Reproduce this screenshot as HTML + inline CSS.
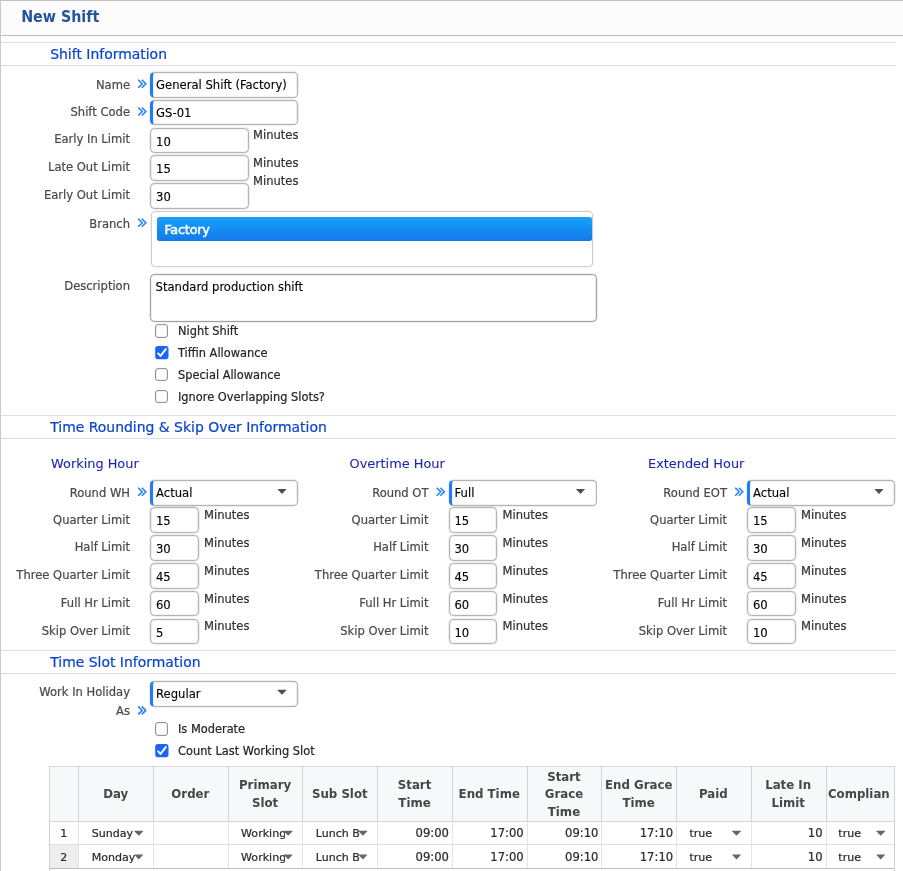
<!DOCTYPE html>
<html><head><meta charset="utf-8"><title>New Shift</title>
<style>
html,body{margin:0;padding:0;background:#fff;}
body{width:903px;height:871px;overflow:hidden;position:relative;font-family:"DejaVu Sans","Liberation Sans",sans-serif;font-size:11.55px;color:#4a4a4a;}
#w{position:absolute;left:0;top:0;width:903px;height:871px;overflow:hidden;will-change:transform;}
.a{position:absolute;white-space:nowrap;-webkit-text-stroke:0.22px currentColor;}
.hdr{left:0;top:0;width:903px;height:34px;background:#fcfcfc;border-top:1px solid #c4c4c4;border-bottom:1px solid #bdbdbd;box-sizing:content-box;}
.vl{left:0;top:0;width:1px;height:871px;background:#c9c9c9;}
.title{left:21.2px;top:8px;-webkit-text-stroke:0;font-family:"DejaVu Sans Condensed","DejaVu Sans",sans-serif;font-weight:bold;font-size:15.85px;color:#22559a;line-height:18px;}
.ln{left:1px;width:895px;height:1px;background:#dcdcf2;}
.sec{left:50.2px;font-size:13.95px;color:#0b45cf;line-height:18px;}
.sub{font-size:12.9px;-webkit-text-stroke:0.1px currentColor;color:#1d27ad;line-height:16px;}
.lb{text-align:right;width:130px;left:0;line-height:14px;color:#4a4a4a;}
.mn{color:#333;line-height:14px;}
.in{box-sizing:border-box;height:25.6px;border:1px solid #b4b4b4;border-radius:4.5px;background:#fff;font-family:"DejaVu Sans Condensed","Liberation Sans",sans-serif;font-size:12.9px;color:#000;line-height:24.6px;padding-left:5.5px;box-shadow:0 0 0 0.5px rgba(0,0,0,.13),inset 0 0 0 0.5px rgba(0,0,0,.10);-webkit-text-stroke:0.12px currentColor;}
.rq{border-left:3px solid #1f7bfb;padding-left:3.1px;}
.ch{width:10px;height:10px;}
.cb{box-sizing:border-box;width:13.3px;height:13.3px;border:1px solid #949494;border-radius:3px;background:#fff;left:155.2px;box-shadow:inset 0 0 0 0.5px rgba(0,0,0,.12);}
.cl{left:178px;color:#262626;line-height:14px;font-size:11.4px;}
.tb{overflow:hidden;}
.th{display:flex;align-items:center;justify-content:center;text-align:center;font-family:"DejaVu Sans Condensed","DejaVu Sans",sans-serif;font-weight:bold;font-size:13.1px;line-height:17.8px;color:#464646;white-space:nowrap;overflow:hidden;-webkit-text-stroke:0;padding-top:1px;box-sizing:border-box;}
.td{font-size:11.05px;line-height:23.5px;height:23.5px;color:#2a2a2a;}
</style></head><body><div id="w">
<div class="a hdr"></div><div class="a vl"></div><div class="a title">New Shift</div>
<div class="a ln" style="top:42px"></div><div class="a sec" style="top:45px">Shift Information</div><div class="a ln" style="top:65px"></div>
<div class="a lb" style="top:77.5px">Name</div>
<svg class="a" style="left:137px;top:78px;width:11px;height:11px" viewBox="0 0 11 11"><g transform="translate(0.20 0.80)"><path d="M1 0.9 L5.0 4.9 L1 8.9 M4.6 0.9 L8.6 4.9 L4.6 8.9" fill="none" stroke="#267ffb" stroke-width="1.55"/></g></svg>
<div class="a in rq" style="left:150px;top:72px;width:148px">General Shift (Factory)</div>
<div class="a lb" style="top:105.3px">Shift Code</div>
<svg class="a" style="left:137px;top:106px;width:11px;height:11px" viewBox="0 0 11 11"><g transform="translate(0.20 0.60)"><path d="M1 0.9 L5.0 4.9 L1 8.9 M4.6 0.9 L8.6 4.9 L4.6 8.9" fill="none" stroke="#267ffb" stroke-width="1.55"/></g></svg>
<div class="a in rq" style="left:150px;top:99.8px;width:148px">GS-01</div>
<div class="a lb" style="top:132.1px">Early In Limit</div>
<div class="a in" style="left:150px;top:127.6px;width:98.5px;line-height:26px;padding-left:5px">10</div>
<div class="a mn" style="left:253px;top:128.1px">Minutes</div>
<div class="a lb" style="top:159.9px">Late Out Limit</div>
<div class="a in" style="left:150px;top:155.4px;width:98.5px;line-height:26px;padding-left:5px">15</div>
<div class="a mn" style="left:253px;top:155.9px">Minutes</div>
<div class="a lb" style="top:187.7px">Early Out Limit</div>
<div class="a in" style="left:150px;top:183.2px;width:98.5px;line-height:26px;padding-left:5px">30</div>
<div class="a mn" style="left:253px;top:173.7px">Minutes</div>
<div class="a lb" style="top:216.5px">Branch</div>
<svg class="a" style="left:137px;top:217px;width:11px;height:11px" viewBox="0 0 11 11"><g transform="translate(0.20 0.80)"><path d="M1 0.9 L5.0 4.9 L1 8.9 M4.6 0.9 L8.6 4.9 L4.6 8.9" fill="none" stroke="#267ffb" stroke-width="1.55"/></g></svg>
<div class="a" style="left:151px;top:211px;width:442px;height:55.7px;box-sizing:border-box;border:1px solid #cdcdcd;border-radius:4px;background:#fff;box-shadow:0 0 0 0.5px rgba(0,0,0,.06)"></div>
<div class="a" style="left:157.2px;top:216.7px;width:434.6px;height:24.3px;background:linear-gradient(#17a1f9,#1479ea);color:#fff;font-size:12.8px;letter-spacing:-0.2px;-webkit-text-stroke:0.5px #fff;line-height:25.8px;padding-left:7.2px;box-sizing:border-box;border-radius:2.5px">Factory</div>
<div class="a lb" style="top:278.5px">Description</div>
<div class="a in" style="left:150px;top:274px;width:447px;height:47.5px;line-height:16px;padding-top:4px;padding-left:4.6px;border-color:#a2a2a2">Standard production shift</div>
<div class="a cb" style="top:324.25px"></div><div class="a cl" style="top:324.1px">Night Shift</div>
<svg class="a" style="left:155px;top:346px;width:15px;height:15px" viewBox="0 0 15 15"><g transform="translate(0.20 0.05)"><rect x="0" y="0" width="13.3" height="13.3" rx="2.8" fill="#1c63fb"/><path d="M2.9 7.3 L5.3 9.9 L10.6 3.0" fill="none" stroke="#fff" stroke-width="1.9" stroke-linecap="round" stroke-linejoin="round"/></g></svg><div class="a cl" style="top:345.9px">Tiffin Allowance</div>
<div class="a cb" style="top:367.85px"></div><div class="a cl" style="top:367.7px">Special Allowance</div>
<div class="a cb" style="top:389.65px"></div><div class="a cl" style="top:389.5px">Ignore Overlapping Slots?</div>
<div class="a ln" style="top:415px"></div><div class="a sec" style="top:418px">Time Rounding &amp; Skip Over Information</div><div class="a ln" style="top:438px"></div>
<div class="a sub" style="left:51px;top:456px">Working Hour</div>
<div class="a lb" style="left:0px;top:485.6px">Round WH</div>
<svg class="a" style="left:137px;top:486px;width:11px;height:11px" viewBox="0 0 11 11"><g transform="translate(0.20 0.80)"><path d="M1 0.9 L5.0 4.9 L1 8.9 M4.6 0.9 L8.6 4.9 L4.6 8.9" fill="none" stroke="#267ffb" stroke-width="1.55"/></g></svg>
<div class="a in rq" style="left:150px;top:480px;width:148px">Actual</div>
<svg class="a" style="left:277px;top:488px;width:11px;height:7px" viewBox="0 0 11 7"><g transform="translate(0.00 0.50)"><path d="M0.9 0.4 H9.1 Q9.7 0.5 9.2 1.1 L5.5 5.0 Q5 5.5 4.5 5.0 L0.8 1.1 Q0.3 0.5 0.9 0.4Z" fill="#4f4f4f"/></g></svg>
<div class="a lb" style="left:0px;top:512.5px">Quarter Limit</div>
<div class="a in" style="left:150.3px;top:507.4px;width:48.3px;padding-left:4.6px;line-height:26.4px">15</div>
<div class="a mn" style="left:204px;top:508.1px">Minutes</div>
<div class="a lb" style="left:0px;top:540.3px">Half Limit</div>
<div class="a in" style="left:150.3px;top:535.2px;width:48.3px;padding-left:4.6px;line-height:26.4px">30</div>
<div class="a mn" style="left:204px;top:535.9px">Minutes</div>
<div class="a lb" style="left:0px;top:568.1px">Three Quarter Limit</div>
<div class="a in" style="left:150.3px;top:563px;width:48.3px;padding-left:4.6px;line-height:26.4px">45</div>
<div class="a mn" style="left:204px;top:563.7px">Minutes</div>
<div class="a lb" style="left:0px;top:595.9px">Full Hr Limit</div>
<div class="a in" style="left:150.3px;top:590.8px;width:48.3px;padding-left:4.6px;line-height:26.4px">60</div>
<div class="a mn" style="left:204px;top:591.5px">Minutes</div>
<div class="a lb" style="left:0px;top:623.7px">Skip Over Limit</div>
<div class="a in" style="left:150.3px;top:618.6px;width:48.3px;padding-left:4.6px;line-height:26.4px">5</div>
<div class="a mn" style="left:204px;top:619.3px">Minutes</div>
<div class="a sub" style="left:349.5px;top:456px">Overtime Hour</div>
<div class="a lb" style="left:298.5px;top:485.6px">Round OT</div>
<svg class="a" style="left:435px;top:486px;width:11px;height:11px" viewBox="0 0 11 11"><g transform="translate(0.70 0.80)"><path d="M1 0.9 L5.0 4.9 L1 8.9 M4.6 0.9 L8.6 4.9 L4.6 8.9" fill="none" stroke="#267ffb" stroke-width="1.55"/></g></svg>
<div class="a in rq" style="left:448.5px;top:480px;width:148px">Full</div>
<svg class="a" style="left:575px;top:488px;width:11px;height:7px" viewBox="0 0 11 7"><g transform="translate(0.50 0.50)"><path d="M0.9 0.4 H9.1 Q9.7 0.5 9.2 1.1 L5.5 5.0 Q5 5.5 4.5 5.0 L0.8 1.1 Q0.3 0.5 0.9 0.4Z" fill="#4f4f4f"/></g></svg>
<div class="a lb" style="left:298.5px;top:512.5px">Quarter Limit</div>
<div class="a in" style="left:448.8px;top:507.4px;width:48.3px;padding-left:4.6px;line-height:26.4px">15</div>
<div class="a mn" style="left:502.5px;top:508.1px">Minutes</div>
<div class="a lb" style="left:298.5px;top:540.3px">Half Limit</div>
<div class="a in" style="left:448.8px;top:535.2px;width:48.3px;padding-left:4.6px;line-height:26.4px">30</div>
<div class="a mn" style="left:502.5px;top:535.9px">Minutes</div>
<div class="a lb" style="left:298.5px;top:568.1px">Three Quarter Limit</div>
<div class="a in" style="left:448.8px;top:563px;width:48.3px;padding-left:4.6px;line-height:26.4px">45</div>
<div class="a mn" style="left:502.5px;top:563.7px">Minutes</div>
<div class="a lb" style="left:298.5px;top:595.9px">Full Hr Limit</div>
<div class="a in" style="left:448.8px;top:590.8px;width:48.3px;padding-left:4.6px;line-height:26.4px">60</div>
<div class="a mn" style="left:502.5px;top:591.5px">Minutes</div>
<div class="a lb" style="left:298.5px;top:623.7px">Skip Over Limit</div>
<div class="a in" style="left:448.8px;top:618.6px;width:48.3px;padding-left:4.6px;line-height:26.4px">10</div>
<div class="a mn" style="left:502.5px;top:619.3px">Minutes</div>
<div class="a sub" style="left:648px;top:456px">Extended Hour</div>
<div class="a lb" style="left:597px;top:485.6px">Round EOT</div>
<svg class="a" style="left:734px;top:486px;width:11px;height:11px" viewBox="0 0 11 11"><g transform="translate(0.20 0.80)"><path d="M1 0.9 L5.0 4.9 L1 8.9 M4.6 0.9 L8.6 4.9 L4.6 8.9" fill="none" stroke="#267ffb" stroke-width="1.55"/></g></svg>
<div class="a in rq" style="left:747px;top:480px;width:148px">Actual</div>
<svg class="a" style="left:874px;top:488px;width:11px;height:7px" viewBox="0 0 11 7"><g transform="translate(0.00 0.50)"><path d="M0.9 0.4 H9.1 Q9.7 0.5 9.2 1.1 L5.5 5.0 Q5 5.5 4.5 5.0 L0.8 1.1 Q0.3 0.5 0.9 0.4Z" fill="#4f4f4f"/></g></svg>
<div class="a lb" style="left:597px;top:512.5px">Quarter Limit</div>
<div class="a in" style="left:747.3px;top:507.4px;width:48.3px;padding-left:4.6px;line-height:26.4px">15</div>
<div class="a mn" style="left:801px;top:508.1px">Minutes</div>
<div class="a lb" style="left:597px;top:540.3px">Half Limit</div>
<div class="a in" style="left:747.3px;top:535.2px;width:48.3px;padding-left:4.6px;line-height:26.4px">30</div>
<div class="a mn" style="left:801px;top:535.9px">Minutes</div>
<div class="a lb" style="left:597px;top:568.1px">Three Quarter Limit</div>
<div class="a in" style="left:747.3px;top:563px;width:48.3px;padding-left:4.6px;line-height:26.4px">45</div>
<div class="a mn" style="left:801px;top:563.7px">Minutes</div>
<div class="a lb" style="left:597px;top:595.9px">Full Hr Limit</div>
<div class="a in" style="left:747.3px;top:590.8px;width:48.3px;padding-left:4.6px;line-height:26.4px">60</div>
<div class="a mn" style="left:801px;top:591.5px">Minutes</div>
<div class="a lb" style="left:597px;top:623.7px">Skip Over Limit</div>
<div class="a in" style="left:747.3px;top:618.6px;width:48.3px;padding-left:4.6px;line-height:26.4px">10</div>
<div class="a mn" style="left:801px;top:619.3px">Minutes</div>
<div class="a ln" style="top:650px"></div><div class="a sec" style="top:653px">Time Slot Information</div><div class="a ln" style="top:673px"></div>
<div class="a lb" style="top:685px">Work In Holiday</div><div class="a lb" style="top:704px">As</div>
<svg class="a" style="left:137px;top:705px;width:11px;height:11px" viewBox="0 0 11 11"><g transform="translate(0.20 0.50)"><path d="M1 0.9 L5.0 4.9 L1 8.9 M4.6 0.9 L8.6 4.9 L4.6 8.9" fill="none" stroke="#267ffb" stroke-width="1.55"/></g></svg>
<div class="a in rq" style="left:150px;top:681px;width:148px">Regular</div>
<svg class="a" style="left:277px;top:689px;width:11px;height:7px" viewBox="0 0 11 7"><g transform="translate(0.00 0.30)"><path d="M0.9 0.4 H9.1 Q9.7 0.5 9.2 1.1 L5.5 5.0 Q5 5.5 4.5 5.0 L0.8 1.1 Q0.3 0.5 0.9 0.4Z" fill="#4f4f4f"/></g></svg>
<div class="a cb" style="top:722.25px"></div><div class="a cl" style="top:722.1px">Is Moderate</div>
<svg class="a" style="left:155px;top:744px;width:15px;height:15px" viewBox="0 0 15 15"><g transform="translate(0.20 0.05)"><rect x="0" y="0" width="13.3" height="13.3" rx="2.8" fill="#1c63fb"/><path d="M2.9 7.3 L5.3 9.9 L10.6 3.0" fill="none" stroke="#fff" stroke-width="1.9" stroke-linecap="round" stroke-linejoin="round"/></g></svg><div class="a cl" style="top:743.9px">Count Last Working Slot</div>
<div class="a tb" style="left:49px;top:766px;width:846px;height:110px;">
<div class="a" style="left:0;top:0;width:846px;height:55.5px;background:#f7f8f9;border-top:1px solid #d9d9d9;border-bottom:1px solid #d4d4d4;box-sizing:border-box"></div>
<div class="a" style="left:0;top:78.5px;width:29.3px;height:23.5px;background:#eeeeee"></div>
<div class="a" style="left:0;top:78px;width:846px;height:1px;background:#dedede"></div>
<div class="a" style="left:0;top:101.7px;width:846px;height:1.5px;background:#bdbdbd"></div>
<div class="a" style="left:0px;top:0;width:1px;height:55px;background:#d2d2d2"></div>
<div class="a" style="left:0px;top:55px;width:1px;height:50px;background:#cfcfcf"></div>
<div class="a" style="left:29.3px;top:0;width:1px;height:55px;background:#d2d2d2"></div>
<div class="a" style="left:29.3px;top:55px;width:1px;height:47px;background:#e4e4e4"></div>
<div class="a" style="left:104.02px;top:0;width:1px;height:55px;background:#d2d2d2"></div>
<div class="a" style="left:104.02px;top:55px;width:1px;height:47px;background:#e4e4e4"></div>
<div class="a" style="left:178.74px;top:0;width:1px;height:55px;background:#d2d2d2"></div>
<div class="a" style="left:178.74px;top:55px;width:1px;height:47px;background:#e4e4e4"></div>
<div class="a" style="left:253.46px;top:0;width:1px;height:55px;background:#d2d2d2"></div>
<div class="a" style="left:253.46px;top:55px;width:1px;height:47px;background:#e4e4e4"></div>
<div class="a" style="left:328.18px;top:0;width:1px;height:55px;background:#d2d2d2"></div>
<div class="a" style="left:328.18px;top:55px;width:1px;height:47px;background:#e4e4e4"></div>
<div class="a" style="left:402.9px;top:0;width:1px;height:55px;background:#d2d2d2"></div>
<div class="a" style="left:402.9px;top:55px;width:1px;height:47px;background:#e4e4e4"></div>
<div class="a" style="left:477.62px;top:0;width:1px;height:55px;background:#d2d2d2"></div>
<div class="a" style="left:477.62px;top:55px;width:1px;height:47px;background:#e4e4e4"></div>
<div class="a" style="left:552.34px;top:0;width:1px;height:55px;background:#d2d2d2"></div>
<div class="a" style="left:552.34px;top:55px;width:1px;height:47px;background:#e4e4e4"></div>
<div class="a" style="left:627.06px;top:0;width:1px;height:55px;background:#d2d2d2"></div>
<div class="a" style="left:627.06px;top:55px;width:1px;height:47px;background:#e4e4e4"></div>
<div class="a" style="left:701.78px;top:0;width:1px;height:55px;background:#d2d2d2"></div>
<div class="a" style="left:701.78px;top:55px;width:1px;height:47px;background:#e4e4e4"></div>
<div class="a" style="left:776.5px;top:0;width:1px;height:55px;background:#d2d2d2"></div>
<div class="a" style="left:776.5px;top:55px;width:1px;height:47px;background:#e4e4e4"></div>
<div class="a" style="left:845px;top:0;width:1px;height:55px;background:#d2d2d2"></div>
<div class="a" style="left:845px;top:55px;width:1px;height:50px;background:#cfcfcf"></div>
<div class="a th" style="left:29.3px;top:0;width:74.72px;height:55.5px"><span>Day</span></div>
<div class="a th" style="left:104.02px;top:0;width:74.72px;height:55.5px"><span>Order</span></div>
<div class="a th" style="left:178.74px;top:0;width:74.72px;height:55.5px"><span>Primary<br>Slot</span></div>
<div class="a th" style="left:253.46px;top:0;width:74.72px;height:55.5px"><span>Sub Slot</span></div>
<div class="a th" style="left:328.18px;top:0;width:74.72px;height:55.5px"><span>Start<br>Time</span></div>
<div class="a th" style="left:402.9px;top:0;width:74.72px;height:55.5px"><span>End Time</span></div>
<div class="a th" style="left:477.62px;top:0;width:74.72px;height:55.5px"><span>Start<br>Grace<br>Time</span></div>
<div class="a th" style="left:552.34px;top:0;width:74.72px;height:55.5px"><span>End Grace<br>Time</span></div>
<div class="a th" style="left:627.06px;top:0;width:74.72px;height:55.5px"><span>Paid</span></div>
<div class="a th" style="left:701.78px;top:0;width:74.72px;height:55.5px"><span>Late In<br>Limit</span></div>
<div class="a th" style="left:776.5px;top:0;width:69.5px;height:55.5px;justify-content:flex-start;padding-left:2.4px;box-sizing:border-box"><span>Complian</span></div>
<div class="a td" style="left:0px;top:55.9px;width:29.3px;text-align:center">1</div>
<div class="a td" style="left:42.66px;top:55.9px;width:44px;overflow:hidden">Sunday</div>
<svg class="a" style="left:84px;top:64px;width:11px;height:7px" viewBox="0 0 11 7"><g transform="translate(0.76 0.30)"><path d="M0.9 0.4 H9.1 Q9.7 0.5 9.2 1.1 L5.5 5.0 Q5 5.5 4.5 5.0 L0.8 1.1 Q0.3 0.5 0.9 0.4Z" fill="#666"/></g></svg>
<div class="a td" style="left:192.1px;top:55.9px;width:44px;overflow:hidden">Working</div>
<svg class="a" style="left:234px;top:64px;width:11px;height:7px" viewBox="0 0 11 7"><g transform="translate(0.20 0.30)"><path d="M0.9 0.4 H9.1 Q9.7 0.5 9.2 1.1 L5.5 5.0 Q5 5.5 4.5 5.0 L0.8 1.1 Q0.3 0.5 0.9 0.4Z" fill="#666"/></g></svg>
<div class="a td" style="left:266.82px;top:55.9px;width:44px;overflow:hidden">Lunch B</div>
<svg class="a" style="left:308px;top:64px;width:11px;height:7px" viewBox="0 0 11 7"><g transform="translate(0.92 0.30)"><path d="M0.9 0.4 H9.1 Q9.7 0.5 9.2 1.1 L5.5 5.0 Q5 5.5 4.5 5.0 L0.8 1.1 Q0.3 0.5 0.9 0.4Z" fill="#666"/></g></svg>
<div class="a td" style="left:328.18px;top:55.9px;width:71.82px;text-align:right;font-size:11.6px">09:00</div>
<div class="a td" style="left:402.9px;top:55.9px;width:71.82px;text-align:right;font-size:11.6px">17:00</div>
<div class="a td" style="left:477.62px;top:55.9px;width:71.82px;text-align:right;font-size:11.6px">09:10</div>
<div class="a td" style="left:552.34px;top:55.9px;width:71.82px;text-align:right;font-size:11.6px">17:10</div>
<div class="a td" style="left:640.42px;top:55.9px;width:44px;overflow:hidden">true</div>
<svg class="a" style="left:682px;top:64px;width:11px;height:7px" viewBox="0 0 11 7"><g transform="translate(0.52 0.30)"><path d="M0.9 0.4 H9.1 Q9.7 0.5 9.2 1.1 L5.5 5.0 Q5 5.5 4.5 5.0 L0.8 1.1 Q0.3 0.5 0.9 0.4Z" fill="#666"/></g></svg>
<div class="a td" style="left:701.78px;top:55.9px;width:71.82px;text-align:right;font-size:11.6px">10</div>
<div class="a td" style="left:789.3px;top:55.9px;width:36px;overflow:hidden">true</div>
<svg class="a" style="left:826px;top:64px;width:11px;height:7px" viewBox="0 0 11 7"><g transform="translate(0.70 0.30)"><path d="M0.9 0.4 H9.1 Q9.7 0.5 9.2 1.1 L5.5 5.0 Q5 5.5 4.5 5.0 L0.8 1.1 Q0.3 0.5 0.9 0.4Z" fill="#666"/></g></svg>
<div class="a td" style="left:0px;top:79.6px;width:29.3px;text-align:center">2</div>
<div class="a td" style="left:42.66px;top:79.6px;width:44px;overflow:hidden">Monday</div>
<svg class="a" style="left:84px;top:88px;width:11px;height:7px" viewBox="0 0 11 7"><g transform="translate(0.76 0.00)"><path d="M0.9 0.4 H9.1 Q9.7 0.5 9.2 1.1 L5.5 5.0 Q5 5.5 4.5 5.0 L0.8 1.1 Q0.3 0.5 0.9 0.4Z" fill="#666"/></g></svg>
<div class="a td" style="left:192.1px;top:79.6px;width:44px;overflow:hidden">Working</div>
<svg class="a" style="left:234px;top:88px;width:11px;height:7px" viewBox="0 0 11 7"><g transform="translate(0.20 0.00)"><path d="M0.9 0.4 H9.1 Q9.7 0.5 9.2 1.1 L5.5 5.0 Q5 5.5 4.5 5.0 L0.8 1.1 Q0.3 0.5 0.9 0.4Z" fill="#666"/></g></svg>
<div class="a td" style="left:266.82px;top:79.6px;width:44px;overflow:hidden">Lunch B</div>
<svg class="a" style="left:308px;top:88px;width:11px;height:7px" viewBox="0 0 11 7"><g transform="translate(0.92 0.00)"><path d="M0.9 0.4 H9.1 Q9.7 0.5 9.2 1.1 L5.5 5.0 Q5 5.5 4.5 5.0 L0.8 1.1 Q0.3 0.5 0.9 0.4Z" fill="#666"/></g></svg>
<div class="a td" style="left:328.18px;top:79.6px;width:71.82px;text-align:right;font-size:11.6px">09:00</div>
<div class="a td" style="left:402.9px;top:79.6px;width:71.82px;text-align:right;font-size:11.6px">17:00</div>
<div class="a td" style="left:477.62px;top:79.6px;width:71.82px;text-align:right;font-size:11.6px">09:10</div>
<div class="a td" style="left:552.34px;top:79.6px;width:71.82px;text-align:right;font-size:11.6px">17:10</div>
<div class="a td" style="left:640.42px;top:79.6px;width:44px;overflow:hidden">true</div>
<svg class="a" style="left:682px;top:88px;width:11px;height:7px" viewBox="0 0 11 7"><g transform="translate(0.52 0.00)"><path d="M0.9 0.4 H9.1 Q9.7 0.5 9.2 1.1 L5.5 5.0 Q5 5.5 4.5 5.0 L0.8 1.1 Q0.3 0.5 0.9 0.4Z" fill="#666"/></g></svg>
<div class="a td" style="left:701.78px;top:79.6px;width:71.82px;text-align:right;font-size:11.6px">10</div>
<div class="a td" style="left:789.3px;top:79.6px;width:36px;overflow:hidden">true</div>
<svg class="a" style="left:826px;top:88px;width:11px;height:7px" viewBox="0 0 11 7"><g transform="translate(0.70 0.00)"><path d="M0.9 0.4 H9.1 Q9.7 0.5 9.2 1.1 L5.5 5.0 Q5 5.5 4.5 5.0 L0.8 1.1 Q0.3 0.5 0.9 0.4Z" fill="#666"/></g></svg>
</div>
</div></body></html>
